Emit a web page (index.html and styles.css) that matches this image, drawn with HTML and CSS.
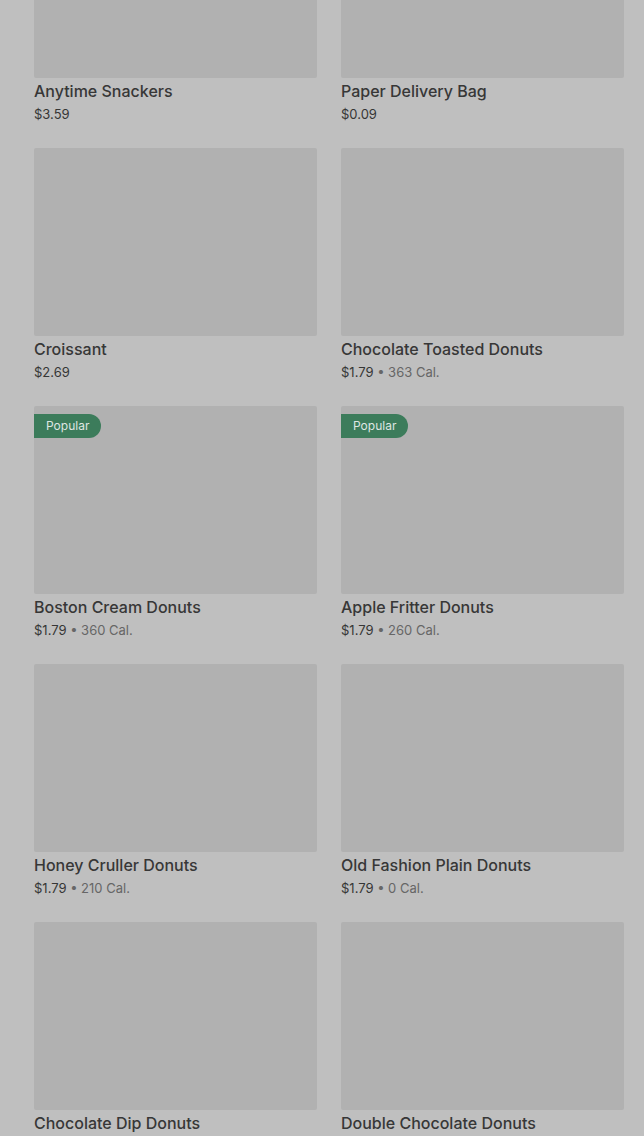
FILE: index.html
```html
<!DOCTYPE html>
<html>
<head>
<meta charset="utf-8">
<link rel="stylesheet" href="styles.css">
</head>
<body>
<div class="grid">
  <div class="card"><div class="img"></div><div class="title">Anytime Snackers</div><div class="meta"><span class="price">$3.59</span></div></div>
  <div class="card"><div class="img"></div><div class="title">Paper Delivery Bag</div><div class="meta"><span class="price">$0.09</span></div></div>
  <div class="card"><div class="img"></div><div class="title">Croissant</div><div class="meta"><span class="price">$2.69</span></div></div>
  <div class="card"><div class="img"></div><div class="title">Chocolate Toasted Donuts</div><div class="meta"><span class="price">$1.79</span><span class="cal"> • 363 Cal.</span></div></div>
  <div class="card"><div class="img"><span class="badge">Popular</span></div><div class="title">Boston Cream Donuts</div><div class="meta"><span class="price">$1.79</span><span class="cal"> • 360 Cal.</span></div></div>
  <div class="card"><div class="img"><span class="badge">Popular</span></div><div class="title">Apple Fritter Donuts</div><div class="meta"><span class="price">$1.79</span><span class="cal"> • 260 Cal.</span></div></div>
  <div class="card"><div class="img"></div><div class="title">Honey Cruller Donuts</div><div class="meta"><span class="price">$1.79</span><span class="cal"> • 210 Cal.</span></div></div>
  <div class="card"><div class="img"></div><div class="title">Old Fashion Plain Donuts</div><div class="meta"><span class="price">$1.79</span><span class="cal"> • 0 Cal.</span></div></div>
  <div class="card"><div class="img"></div><div class="title">Chocolate Dip Donuts</div></div>
  <div class="card"><div class="img"></div><div class="title">Double Chocolate Donuts</div></div>
</div>
</body>
</html>
```
FILE: styles.css
```css
html, body {
  margin: 0;
  padding: 0;
  background: #bfbfbf;
  height: 1136px;
  overflow: hidden;
}
body {
  font-family: "Inter", "Liberation Sans", sans-serif;
}
.grid {
  display: grid;
  grid-template-columns: 283px 283px;
  column-gap: 24px;
  row-gap: 24px;
  padding: 0 20px 0 34px;
  margin-top: -110px;
}
.card {
  display: flex;
  flex-direction: column;
}
.img {
  position: relative;
  height: 188px;
  background: #b1b1b1;
  border-radius: 2px;
}
.badge {
  position: absolute;
  left: 0;
  top: 8px;
  height: 24px;
  line-height: 24px;
  padding: 0 12px 0 12px;
  background: #3c7c5b;
  color: #dfe6e2;
  font-size: 12px;
  border-radius: 0 12px 12px 0;
}
.title {
  font-size: 16px;
  font-weight: 500;
  line-height: 26px;
  color: #373737;
}
.meta {
  font-size: 13px;
  line-height: 20px;
  color: #363636;
}
.cal {
  color: #666;
}
```
